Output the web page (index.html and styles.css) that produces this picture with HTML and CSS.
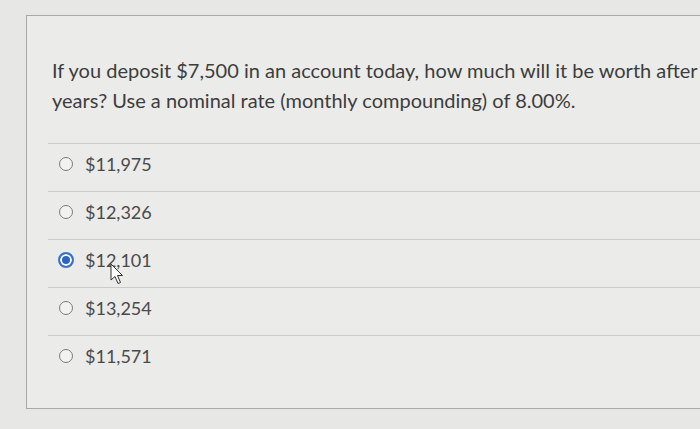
FILE: index.html
```html
<!DOCTYPE html>
<html>
<head>
<meta charset="utf-8">
<link rel="stylesheet" href="styles.css">
</head>
<body>
<div class="card">
  <p class="question">If you deposit $7,500 in an account today, how much will it be worth after 6 years? Use a nominal rate (monthly compounding) of 8.00%.</p>
  <ul class="answers">
    <li class="answer"><span class="radio"></span><span class="label">$11,975</span></li>
    <li class="answer"><span class="radio"></span><span class="label">$12,326</span></li>
    <li class="answer selected"><span class="radio"></span><span class="label">$12,101</span>
      <svg class="cursor" width="14" height="22" viewBox="0 0 14 22"><path d="M1 1 L1 17 L5 13.5 L8 20.5 L10.5 19.5 L7.5 12.5 L12.5 12.5 Z" fill="#fff" stroke="#333" stroke-width="1" stroke-linejoin="round"/></svg>
    </li>
    <li class="answer"><span class="radio"></span><span class="label">$13,254</span></li>
    <li class="answer"><span class="radio"></span><span class="label">$11,571</span></li>
  </ul>
</div>
</body>
</html>
```
FILE: styles.css
```css
html, body {
  margin: 0;
  padding: 0;
  background: #e7e7e5;
  overflow: hidden;
}
body {
  font-family: Lato, "Open Sans", sans-serif;
  color: #3f3f3f;
}
.card {
  margin: 15px 0 0 26px;
  border-top: 1px solid #a9a9a8;
  border-left: 1px solid #a9a9a8;
  border-bottom: 1px solid #a9a9a8;
  height: 394px;
  box-sizing: border-box;
  width: calc(100% - 26px);
  overflow: hidden;
  background: #ebebea;
}
.question {
  margin: 39px 0 0 25px;
  font-size: 20px;
  line-height: 30px;
  width: 680px;
  color: #3d3d3d;
}
.answers {
  list-style: none;
  margin: 28px 0 0 21px;
  padding: 0;
}
.answer {
  position: relative;
  display: flex;
  align-items: center;
  gap: 12px;
  border-top: 1px solid #cbcbca;
  padding: 8px 0 15px 11px;
  height: 24px;
}
.radio {
  width: 14px;
  height: 14px;
  border: 1.5px solid #7c7c7c;
  border-radius: 50%;
  box-sizing: border-box;
  background: #f2f2f1;
}
.selected .radio {
  width: 16px;
  height: 16px;
  margin-left: -1px;
  margin-right: -1px;
  border: 2px solid #3a72c8;
  background: #2c64bf;
  box-shadow: inset 0 0 0 2px #fff;
}
.label {
  font-size: 18px;
  line-height: 24px;
  color: #4a4a4a;
}
.cursor {
  position: absolute;
  left: 62px;
  top: 23px;
}
```
